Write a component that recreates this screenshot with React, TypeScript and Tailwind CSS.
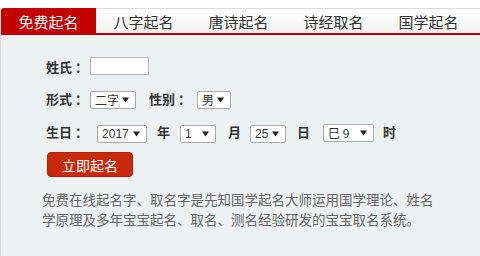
import React from "react";

const tabs = ["免费起名", "八字起名", "唐诗起名", "诗经取名", "国学起名"];

// fake select box, drawn like the old IE/Chrome dropdown in the shot
const Sel = ({ value, w, cjk = false }: { value: string; w: string; cjk?: boolean }) => (
  <span
    className={`${w} h-[18px] inline-flex items-center justify-between bg-white border border-[#a9a9a9] rounded-[2px] pl-[4px] pr-[6px] text-[#333] ${
      cjk ? "text-[12px]" : "text-[12px] font-['Liberation_Sans']"
    }`}
  >
    <span className="leading-none">{value}</span>
    <svg width="7" height="6" viewBox="0 0 7 6" className="shrink-0">
      <path d="M0 0.5 H7 L3.5 5.5 Z" fill="#222" />
    </svg>
  </span>
);

const Label = ({ children, colon = false, className = "" }: { children: React.ReactNode; colon?: boolean; className?: string }) => (
  <span className={`text-[13px] font-bold text-[#333] leading-none whitespace-nowrap ${className}`}>
    {children}
    {colon && <span className="ml-[3px]">：</span>}
  </span>
);

export default function App() {
  return (
    <div className="w-[480px] h-[256px] bg-white pt-[8px] overflow-hidden font-['Noto_Sans_CJK_SC','Noto_Sans',sans-serif]">
      <div className="h-[248px] border-l border-[#d6d6d6] rounded-tl-[4px] flex flex-col">
        {/* tab bar */}
        <div className="h-[27px] flex bg-gradient-to-b from-white to-[#f1f1f1] border-t border-[#dcdcdc] border-b-2 border-b-[#b00000] rounded-tl-[4px]">
          {tabs.map((t, i) => (
            <div
              key={t}
              className={`w-[95px] h-[25px] flex items-center justify-center text-[15px] leading-none ${
                i === 0 ? "bg-[#c30000] text-white rounded-tl-[3px] -mt-px h-[26px]" : "text-[#333]"
              }`}
            >
              {t}
            </div>
          ))}
        </div>

        {/* form panel */}
        <div className="flex-1 bg-[#edf1f2] pl-[45px] pt-[22px]">
          <div className="flex items-center h-[18px]">
            <Label colon>姓氏</Label>
            <span className="ml-[2px] w-[59px] h-[18px] bg-white border border-[#b5b5b5]" />
          </div>

          <div className="flex items-center h-[18px] mt-[14px]">
            <Label colon>形式</Label>
            <span className="ml-[2px]">
              <Sel value="二字" w="w-[46px]" cjk />
            </span>
            <Label colon className="ml-[13px]">性别</Label>
            <span className="ml-[6px]">
              <Sel value="男" w="w-[34px]" cjk />
            </span>
          </div>

          <div className="flex items-center h-[18px] mt-[15px]">
            <Label colon>生日</Label>
            <span className="ml-[9px]">
              <Sel value="2017" w="w-[50px]" />
            </span>
            <Label className="ml-[10px]">年</Label>
            <span className="ml-[10px]">
              <Sel value="1" w="w-[36px]" />
            </span>
            <Label className="ml-[12px]">月</Label>
            <span className="ml-[9px]">
              <Sel value="25" w="w-[36px]" />
            </span>
            <Label className="ml-[11px]">日</Label>
            <span className="ml-[13px]">
              <Sel value="巳 9" w="w-[51px]" cjk />
            </span>
            <Label className="ml-[9px]">时</Label>
          </div>

          <button className="mt-[12px] ml-px w-[86px] h-[25px] bg-[#c8290b] border border-[#b32006] rounded-[4px] text-white text-[14px] leading-none">
            立即起名
          </button>

          <p className="-ml-[4px] mt-[12px] w-[400px] text-[13.5px] leading-[20px] text-[#666]">
            免费在线起名字、取名字是先知国学起名大师运用国学理论、姓名学原理及多年宝宝起名、取名、测名经验研发的宝宝取名系统。
          </p>
        </div>
      </div>
    </div>
  );
}
